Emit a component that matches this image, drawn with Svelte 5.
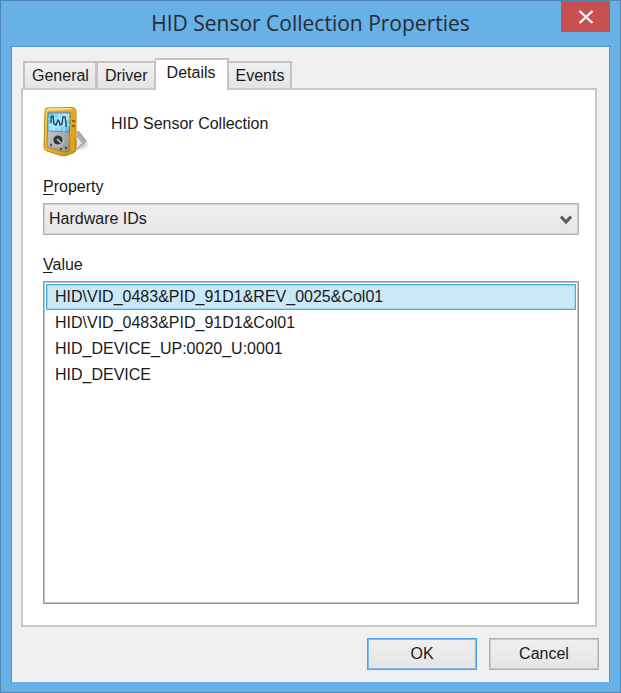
<script lang="ts">
	const tabs = ['General', 'Driver', 'Details', 'Events'];
	const properties = ['Hardware IDs'];
	const values = [
		'HID\\VID_0483&PID_91D1&REV_0025&Col01',
		'HID\\VID_0483&PID_91D1&Col01',
		'HID_DEVICE_UP:0020_U:0001',
		'HID_DEVICE'
	];

	let activeTab = $state('Details');
	let property = $state('Hardware IDs');
	let selected = $state(0);

	function onListKey(e: KeyboardEvent) {
		if (e.key === 'ArrowDown') selected = Math.min(selected + 1, values.length - 1);
		else if (e.key === 'ArrowUp') selected = Math.max(selected - 1, 0);
		else return;
		e.preventDefault();
	}
</script>

<div class="window" role="dialog" aria-labelledby="title">
	<header class="titlebar">
		<h1 id="title">HID Sensor Collection Properties</h1>
		<button class="close" type="button" aria-label="Close">
			<svg width="16" height="14" viewBox="0 0 16 14" aria-hidden="true">
				<path d="M1.5 1 L14.5 13 M14.5 1 L1.5 13" stroke="#fff" stroke-width="2.2" />
			</svg>
		</button>
	</header>

	<div class="client">
		<div class="tabs" role="tablist">
			{#each tabs as tab}
				<button
					class="tab"
					class:active={tab === activeTab}
					type="button"
					role="tab"
					aria-selected={tab === activeTab}
					onclick={() => (activeTab = tab)}>{tab}</button
				>
			{/each}
		</div>

		<main class="panel" role="tabpanel">
			<div class="device">
				<!-- Handheld meter with a folding stand -->
				<svg class="icon" width="48" height="52" viewBox="0 0 48 52" aria-hidden="true">
					<defs>
						<linearGradient id="gold" x1="0" y1="0" x2="1" y2="1">
							<stop offset="0" stop-color="#f8d669" />
							<stop offset="0.5" stop-color="#edb52a" />
							<stop offset="1" stop-color="#c48a10" />
						</linearGradient>
						<linearGradient id="lcd" x1="0" y1="0" x2="1" y2="1">
							<stop offset="0" stop-color="#5cc4ec" />
							<stop offset="0.5" stop-color="#a5e6fa" />
							<stop offset="1" stop-color="#49b4e2" />
						</linearGradient>
						<linearGradient id="steel" x1="0" y1="0" x2="1" y2="1">
							<stop offset="0" stop-color="#d6d8da" />
							<stop offset="1" stop-color="#8f9396" />
						</linearGradient>
						<radialGradient id="shade">
							<stop offset="0" stop-color="#000" stop-opacity="0.35" />
							<stop offset="1" stop-color="#000" stop-opacity="0" />
						</radialGradient>
					</defs>
					<ellipse cx="36" cy="37" rx="11" ry="7" fill="url(#shade)" />
					<path d="M34 24 L36 24 L44 34 L42 36 L34 43 Z" fill="#a9abac" />
					<path d="M34 30 L39 36 L34 41 Z" fill="#e6e6e6" />
					<path
						d="M4 1 L29 0.5 Q33 0.5 33 4 L33 42 Q33 45 30 46 L23 48.5 Q21 49 18 48.5 L4 44 Q1 43 1 40 L2 4 Q2 1 4 1 Z"
						fill="url(#gold)"
						stroke="#bd8413"
					/>
					<path d="M29 3 Q31 3 31 5 L31 43 L28 45 L28 5 Z" fill="#dfa31c" />
					<path d="M5 2 L28 1.5" stroke="#fff0b0" />
					<path d="M5 5 L27 5 L26 44 L21 45 L4 40 Z" fill="url(#steel)" stroke="#92701b" stroke-width="0.7" />
					<path d="M5 6 L27 6 L26.5 25 L5 24 Z" fill="url(#lcd)" stroke="#347b9d" stroke-width="0.7" />
					<path d="M11 6 V24 M16 6 V24 M21 6 V25 M5 12 H27 M5 18 H27" stroke="#dcf6ff" stroke-width="0.6" />
					<path
						d="M8 16 L8 10 L10 9 L11 17 L13 18 L15 13 L16 14 L17 18 L19 17 L20 10 L22 10 L23 16 L23 20"
						fill="none"
						stroke="#174c6c"
						stroke-width="1.4"
					/>
					<ellipse cx="15" cy="34" rx="6" ry="6" fill="#b9bcbe" />
					<circle cx="15" cy="33" r="4.6" fill="#34383b" />
					<path d="M14 32 L18 36" stroke="#d0d3d5" stroke-width="1.4" />
					<circle cx="8" cy="38" r="1.2" fill="#555" />
					<circle cx="18" cy="42" r="1.2" fill="#444" />
					<circle cx="23" cy="41" r="1.2" fill="#444" />
					<path d="M29 14 L32 14 M29 19 L32 19" stroke="#6d4a05" stroke-width="1.4" />
				</svg>
				<span>HID Sensor Collection</span>
			</div>

			<label for="property"><u>P</u>roperty</label>
			<div class="combo">
				<select id="property" bind:value={property}>
					{#each properties as name}
						<option>{name}</option>
					{/each}
				</select>
				<svg class="chevron" width="12" height="10" viewBox="0 0 12 10" aria-hidden="true">
					<path d="M1 1.5 L6 7 L11 1.5" fill="none" stroke="#5c5c5c" stroke-width="3" />
				</svg>
			</div>

			<span class="label" id="value-label"><u>V</u>alue</span>
			<ul
				class="values"
				role="listbox"
				tabindex="0"
				aria-labelledby="value-label"
				aria-activedescendant="value-{selected}"
				onkeydown={onListKey}
			>
				{#each values as value, i}
					<!-- svelte-ignore a11y_click_events_have_key_events -->
					<li
						id="value-{i}"
						class:selected={i === selected}
						role="option"
						aria-selected={i === selected}
						onclick={() => (selected = i)}
					>
						{value}
					</li>
				{/each}
			</ul>
		</main>

		<footer class="actions">
			<button class="push default" type="button">OK</button>
			<button class="push" type="button">Cancel</button>
		</footer>
	</div>
</div>

<style>
	:global(body) {
		margin: 0;
	}

	.window {
		display: flex;
		flex-direction: column;
		box-sizing: border-box;
		min-height: 100vh;
		padding: 0 10px 10px;
		border: 1px solid #4d88b5;
		background: #68b1e7;
		color: #1a1a1a;
		font: 16px/20px 'Liberation Sans', Arial, sans-serif;
	}

	button,
	select {
		box-sizing: border-box;
		margin: 0;
		border-radius: 0;
		color: inherit;
		font: inherit;
	}

	.titlebar {
		position: relative;
		height: 45px;
	}

	h1 {
		margin: 0;
		color: #262c33;
		font: 400 21px/45px 'Open Sans', 'Segoe UI', sans-serif;
		text-align: center;
	}

	.close {
		position: absolute;
		top: 0;
		right: 0;
		display: flex;
		align-items: center;
		justify-content: center;
		width: 49px;
		height: 31px;
		padding: 0;
		border: 0;
		background: #c75050;
	}

	.client {
		display: flex;
		flex: 1;
		flex-direction: column;
		padding: 11px 10px 12px 9px;
		border: 1px solid #5195c8;
		border-bottom: 0;
		background: #f0f0f0;
	}

	.tabs {
		display: flex;
		align-items: flex-end;
		padding-left: 2px;
	}

	.tab {
		height: 27px;
		padding: 0 6px 0 7px;
		border: 2px solid #c4c4c4;
		border-bottom: 0;
		border-left-width: 1px;
		background: linear-gradient(#f0f0f0, #e4e4e4);
	}

	.tab:first-child {
		border-left-width: 2px;
	}

	/* The open tab stands taller and covers the panel's top edge */
	.tab.active {
		position: relative;
		height: 32px;
		margin: 0 -1px -2px;
		padding: 0 11px 4px;
		background: #fff;
	}

	.panel {
		display: flex;
		flex: 1;
		flex-direction: column;
		margin-right: 2px;
		padding: 18px 17px 22px 21px;
		border: 1px solid #c8c8c8;
		background: #fff;
		box-shadow: inset 0 0 0 1px #c8c8c8;
	}

	.device {
		display: flex;
		gap: 20px;
		margin-bottom: 18px;
	}

	.device span {
		padding-top: 7px;
	}

	label,
	.label {
		margin-bottom: 6px;
	}

	u {
		text-underline-offset: 2px;
	}

	.combo {
		position: relative;
		margin-bottom: 20px;
	}

	select {
		display: block;
		width: 100%;
		height: 32px;
		padding: 0 28px 0 5px;
		border: 1px solid #b2b2b2;
		background: linear-gradient(#f0f0f0, #e5e5e5);
		box-shadow: inset 0 0 0 1px #cfcfcf;
		appearance: none;
	}

	.chevron {
		position: absolute;
		top: 12px;
		right: 7px;
		pointer-events: none;
	}

	.values {
		flex: 1;
		margin: 0;
		padding: 2px;
		border: 1px solid #9297a2;
		box-shadow: inset 0 0 0 1px #bcc0c8;
		list-style: none;
		outline: 0;
	}

	.values li {
		padding: 0 8px;
		border: 1px solid transparent;
		line-height: 24px;
	}

	.values li.selected {
		border-color: #45b0e0;
		background: #cbe8f6;
		box-shadow: inset 0 0 0 1px #9fd5ee;
	}

	.actions {
		display: flex;
		justify-content: flex-end;
		gap: 12px;
		margin-top: 11px;
	}

	.push {
		width: 110px;
		height: 32px;
		padding: 0;
		border: 1px solid #b2b2b2;
		background: linear-gradient(#f0f0f0, #e4e4e4);
		box-shadow: inset 0 0 0 1px #cacaca;
	}

	.push.default {
		border-color: #4aa2f5;
		box-shadow: inset 0 0 0 1px #7dbbf6;
	}
</style>
